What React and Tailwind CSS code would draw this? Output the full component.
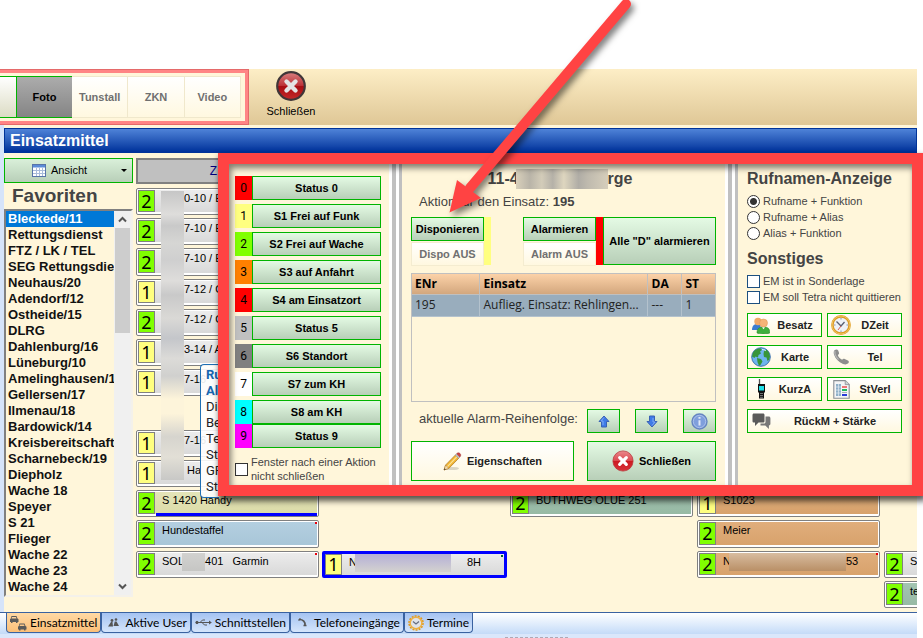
import React from 'react';
import clsx from 'clsx';

const FAVORITES = [
  'Bleckede/11', 'Rettungsdienst', 'FTZ / LK / TEL', 'SEG Rettungsdie', 'Neuhaus/20', 'Adendorf/12',
  'Ostheide/15', 'DLRG', 'Dahlenburg/16', 'Lüneburg/10', 'Amelinghausen/1', 'Gellersen/17',
  'Ilmenau/18', 'Bardowick/14', 'Kreisbereitschaft', 'Scharnebeck/19', 'Diepholz', 'Wache 18',
  'Speyer', 'S 21', 'Flieger', 'Wache 22', 'Wache 23', 'Wache 24',
];

const STATUSES = [
  { digit: '0', label: 'Status 0', color: 'bg-[#ff0000]' },
  { digit: '1', label: 'S1 Frei auf Funk', color: 'bg-[#ffff80]' },
  { digit: '2', label: 'S2 Frei auf Wache', color: 'bg-[#80ff00]' },
  { digit: '3', label: 'S3 auf Anfahrt', color: 'bg-[#ff8000]' },
  { digit: '4', label: 'S4 am Einsatzort', color: 'bg-[#ff0000]' },
  { digit: '5', label: 'Status 5', color: 'bg-[#c0c0c0]' },
  { digit: '6', label: 'S6 Standort', color: 'bg-[#808080]' },
  { digit: '7', label: 'S7 zum KH', color: 'bg-white' },
  { digit: '8', label: 'S8 am KH', color: 'bg-[#00ffff]' },
];

const GRAY = 'from-[#ececec] to-[#d9d9d9]';
const GREEN = 'from-[#a3c4b0] to-[#97baa5]';
const ORANGE = 'from-[#e0ae7c] to-[#d8a26c]';

const UNITS = [
  { pos: 'col-start-1 row-start-1', status: 2, text: '0-10 / E', masked: true },
  { pos: 'col-start-1 row-start-2', status: 2, text: '7-10 / E', masked: true },
  { pos: 'col-start-1 row-start-3', status: 2, text: '7-10 / E', masked: true },
  { pos: 'col-start-1 row-start-4', status: 1, text: '7-12 / G', masked: true },
  { pos: 'col-start-1 row-start-5', status: 2, text: '7-12 / G', masked: true },
  { pos: 'col-start-1 row-start-6', status: 1, text: '3-14 / A', masked: true },
  { pos: 'col-start-1 row-start-7', status: 1, text: '7-16', masked: true },
  { pos: 'col-start-1 row-start-9', status: 1, text: '7-16', masked: true },
  { pos: 'col-start-1 row-start-10', status: 1, text: ' Ha', masked: true },
  { pos: 'col-start-1 row-start-11', status: 2, text: 'S 1420 Handy', fill: 'from-[#e4e4b8] to-[#dcdca8]', underline: true },
  { pos: 'col-start-1 row-start-12', status: 2, text: 'Hundestaffel', fill: 'from-[#b4cfe0] to-[#a8c6d8]', mark: 'bg-red-600' },
  { pos: 'col-start-1 row-start-13', status: 2, text: 'SOL', blur: 'w-[23px] from-[#d2d2d0] to-[#c6c6c4]', after: '401   Garmin', mark: 'bg-red-600' },
  { pos: 'col-start-2 row-start-13', status: 1, text: 'N', blur: 'w-24 from-[#b4afd6] to-[#d4d2cf]', after: '8H', wideGap: true, selected: true, mark: 'bg-green-800' },
  { pos: 'col-start-3 row-start-11', status: 2, text: 'BUTHWEG OLUE 251', fill: GREEN },
  { pos: 'col-start-4 row-start-11', status: 1, text: 'S1023', fill: ORANGE },
  { pos: 'col-start-4 row-start-12', status: 2, text: 'Meier', fill: ORANGE },
  { pos: 'col-start-4 row-start-13', status: 2, text: 'N', fill: ORANGE, blur: 'w-[117px] from-[#d8bda0] to-[#b98f66]', after: '53', mark: 'bg-red-600' },
  { pos: 'col-start-5 row-start-13', status: 2, text: 'S' },
  { pos: 'col-start-5 row-start-14', status: 2, text: 'te', fill: GREEN },
];

const TableIcon = () => (
  <svg width="14" height="13" viewBox="0 0 14 13">
    <rect x=".5" y=".5" width="13" height="12" fill="#fff" stroke="#5874a8" />
    <rect x="1" y="1" width="12" height="2.5" fill="#5b8bd8" />
    <path d="M1 6.5h12M1 9.5h12M4.5 4v8M7.5 4v8M10.5 4v8" stroke="#a9bcdb" />
  </svg>
);

const CloseIcon = ({ size, dark }) => (
  <svg width={size} height={size} viewBox="0 0 30 30">
    <defs>
      <linearGradient id={dark ? 'closeDark' : 'closeRed'} x1="0" y1="0" x2="0" y2="1">
        <stop offset="0" stopColor={dark ? '#d98080' : '#ea8a8e'} />
        <stop offset=".48" stopColor={dark ? '#bd3338' : '#dc4a50'} />
        <stop offset=".52" stopColor={dark ? '#a80d12' : '#cc1a22'} />
        <stop offset="1" stopColor={dark ? '#c42a2a' : '#d8333a'} />
      </linearGradient>
    </defs>
    <circle cx="15" cy="15" r="13.8" fill={dark ? 'url(#closeDark)' : 'url(#closeRed)'} stroke={dark ? '#403638' : '#b8343a'} strokeWidth={dark ? 2.2 : 1} />
    <path d="M10.5 10.5l9 9M19.5 10.5l-9 9" stroke={dark ? '#e4e4e4' : '#fff'} strokeWidth="4.4" strokeLinecap="round" />
  </svg>
);

const PencilIcon = () => (
  <svg width="19" height="19" viewBox="0 0 19 19">
    <ellipse cx="9" cy="16.5" rx="7" ry="1.6" fill="#c9c4b4" opacity=".7" />
    <path d="M1 18l1.6-5L12.4 3l3.4 3.2L5.8 16.4z" fill="#f2b632" stroke="#a8762a" strokeWidth=".7" />
    <path d="M4.2 14.8L14 4.6" stroke="#fbe39a" strokeWidth="1.2" />
    <path d="M12.4 3l1-1 3.4 3.2-1 1z" fill="#c9ccd2" stroke="#85888e" strokeWidth=".5" />
    <path d="M13.6 1.8c1-1.2 2.4-1.2 3.4-.3s1 2.3-.1 3.5z" fill="#d04040" stroke="#943030" strokeWidth=".5" />
    <path d="M1 18l1.6-5 3.2 3.4z" fill="#f3dcae" stroke="#a8762a" strokeWidth=".5" />
    <path d="M1 18l.6-1.8 1.2 1.2z" fill="#333" />
  </svg>
);

const ArrowIcon = ({ down }) => (
  <svg width="12" height="13" viewBox="0 0 12 13" className={down ? 'rotate-180' : ''}>
    <path d="M6 1l5 5.5H8.5V12h-5V6.5H1z" fill="#3f7be8" stroke="#3a62b4" strokeLinejoin="round" />
    <path d="M6 2.5L3 6h2v4" fill="none" stroke="#7fabf5" />
  </svg>
);

const InfoIcon = () => (
  <svg width="17" height="17" viewBox="0 0 17 17">
    <circle cx="8.5" cy="8.5" r="7.5" fill="#7f9fdc" stroke="#6585c0" strokeWidth="1.4" />
    <circle cx="8.5" cy="8.5" r="6.2" fill="none" stroke="#b4c8ee" strokeWidth=".8" />
    <path d="M8.5 4v1.8M8.5 7.2v5.3" stroke="#dfe8f8" strokeWidth="2" />
  </svg>
);

const PeopleIcon = () => (
  <svg width="18" height="17" viewBox="0 0 18 17">
    <path d="M0 13c0-4 2-6 5-6s4 2 4 6z" fill="#3a7bd0" />
    <circle cx="6" cy="4.5" r="3.7" fill="#f0a868" />
    <path d="M5 16c0-4.5 2-6 6.5-6s6.3 1.5 6.3 6c-3 1.2-10 1.2-12.8 0z" fill="#3fae3c" stroke="#2e8a2e" strokeWidth=".6" />
    <circle cx="11.5" cy="6" r="4" fill="#f5b478" stroke="#dd9350" strokeWidth=".5" />
    <path d="M10 10.3l1.5 2 1.5-2z" fill="#fff" />
  </svg>
);

const ClockIcon = () => (
  <svg width="20" height="20" viewBox="0 0 20 20">
    <circle cx="10" cy="10" r="8.6" fill="#eef1f7" stroke="#dc9a28" strokeWidth="2.6" />
    <circle cx="10" cy="10" r="9" fill="none" stroke="#f8d070" strokeWidth=".8" />
    <path d="M10 3v1.5M10 15.5V17M3 10h1.5M15.5 10H17" stroke="#8a93a8" />
    <path d="M5.5 6.5L10 11l3.5-4" fill="none" stroke="#5a5f72" strokeWidth="1.3" />
    <path d="M10 11l-3 4" stroke="#d23a2a" strokeWidth=".8" />
  </svg>
);

const GlobeIcon = () => (
  <svg width="20" height="20" viewBox="0 0 20 20">
    <circle cx="10" cy="10" r="9.3" fill="#6db4ee" stroke="#2f66a8" strokeWidth=".9" />
    <path d="M2 5.5C4 2.5 7 1.2 9.5 1.2L11 3 9 4.5l1 2L7.5 8 7 10.5 4.5 9.5 3.5 11 1 9.5z" fill="#37963a" />
    <path d="M6 11l4 1 1.5 2.5L9.5 18 8 18.7 6.5 15z" fill="#37963a" />
    <path d="M13 4l2.5-1.5 2.5 3 1 4-1 3.5-1.5 1-1-3.5-2.5-.5-.5-3z" fill="#37963a" />
    <path d="M11 2.5c2 0 3 .5 4 1.5" stroke="#d9eefc" fill="none" />
  </svg>
);

const PhoneIcon = () => (
  <svg width="17" height="16" viewBox="0 0 17 16">
    <path d="M1.5 1.2C3 0 4.7.3 5.2 1.5l.8 2.2c.3 1-.2 1.6-1.2 2.2.6 2 2 3.7 4.3 4.8.9-1 1.7-1.2 2.6-.7l3.2 1.5c1.2.6 1.3 2.1.1 3.1-1.4 1-3.2 1-5 .3C5.5 13 2.3 9.5 1 5.5.5 3.6.6 2.1 1.5 1.2z" fill="#8d8d8d" />
    <path d="M2 2c-.6 2.5 1 6 3.5 8.5" stroke="#b9b9b9" strokeWidth="1.2" fill="none" />
  </svg>
);

const RadioIcon = () => (
  <svg width="9" height="20" viewBox="0 0 9 20">
    <path d="M2.5 0v6" stroke="#555" strokeWidth="1.3" />
    <path d="M1 5h7v8l-1 1v5.5H2V14l-1-1z" fill="#111" />
    <rect x="2" y="7" width="5" height="4.5" fill="#1fe0e8" />
    <path d="M3 14.5h3M3 16.5h3M3 18.3h3" stroke="#999" strokeWidth=".7" />
  </svg>
);

const ReportIcon = () => (
  <svg width="17" height="19" viewBox="0 0 17 19">
    <path d="M.8.6h11.4l4 4v13.6H.8z" fill="#f4f5f6" stroke="#8a8f94" strokeWidth="1.1" />
    <path d="M12.2.6v4h4" fill="#cfd3d6" stroke="#8a8f94" strokeWidth=".8" />
    <rect x="3" y="4" width="5" height="12" fill="#8fb0c8" />
    <path d="M3 7h5M3 10h5M3 13h5M5.5 4v12" stroke="#e4edf3" strokeWidth=".7" />
    <path d="M9 7h5" stroke="#e84040" strokeWidth="1.4" />
    <path d="M9 10h5" stroke="#1fb860" strokeWidth="2" />
    <path d="M9 15h5" stroke="#2a3bd8" strokeWidth="2" />
    <path d="M9 12.5h5" stroke="#a8b0b6" />
  </svg>
);

const ChatIcon = () => (
  <svg width="19" height="17" viewBox="0 0 19 17">
    <path d="M13.5 3.5h3.2c1 0 1.7.7 1.7 1.7v5.5c0 1-.7 1.7-1.5 1.7V16l-3.6-3.6H8.5v-1.9h3.7c.8 0 1.3-.6 1.3-1.5z" fill="#777" />
    <path d="M2 .5h9c1 0 1.5.6 1.5 1.5v6c0 1-.5 1.5-1.5 1.5H6.5L3 13V9.5H2C1 9.5.5 9 .5 8V2C.5 1.1 1 .5 2 .5z" fill="#5a5a5a" />
  </svg>
);

const CarsIcon = () => (
  <svg width="17" height="16" viewBox="0 0 17 16" fill="#5a5a5a">
    <path d="M1.5 1h5l1 2.5 1 .7V7h-1v1H6V7H2.5v1H1V7H0V4.2l.8-.7zM2 2l-.5 1.5h5L6 2z" fillRule="evenodd" />
    <path d="M9.5 8.5h5l1 2.5 1 .7v2.800h-1v1H14v-1h-3.500v1H9v-1H8v-2.800l.8-.7zm.5 1L9.500 11h5L14 9.500z" fillRule="evenodd" />
  </svg>
);

const UsersIcon = () => (
  <svg width="11" height="9" viewBox="0 0 11 9" fill="#555">
    <circle cx="4" cy="2.5" r="1.4" />
    <circle cx="8" cy="1.5" r="1.3" />
    <path d="M0 8.5L3 4h1.5L5 8.5zM5.5 8l1.3-4.500h1.700L11 8z" />
  </svg>
);

const UsbIcon = () => (
  <svg width="17" height="9" viewBox="0 0 17 9" fill="none" stroke="#555">
    <circle cx="2" cy="4.5" r="1.2" fill="#555" />
    <path d="M3 4.5h11M5 4.5L7.5 2H10M7 4.5L9.5 7H12" />
    <path d="M14 2.5L16.8 4.5 14 6.5z" fill="#555" stroke="none" />
  </svg>
);

const HandsetIcon = () => (
  <svg width="9" height="9" viewBox="0 0 9 9" fill="none">
    <path d="M1.5 1.5c3.5 0 6 2.5 5.5 6" stroke="#555" strokeWidth="1.7" />
    <path d="M.5 2.5l2-2M5.5 7.5h3" stroke="#555" strokeWidth="1.5" />
  </svg>
);

const GearClockIcon = () => (
  <svg width="16" height="16" viewBox="0 0 16 16">
    <circle cx="8" cy="8" r="7" fill="none" stroke="#e09a20" strokeWidth="1.6" strokeDasharray="2 1.14" />
    <circle cx="8" cy="8" r="5.8" fill="#dfe3ea" stroke="#eeb040" strokeWidth="1.4" />
    <path d="M5 6.5L8 9l3-2.5" fill="none" stroke="#666e80" strokeWidth="1.2" />
  </svg>
);

const GreenButton = ({ className, children, ...props }) => (
  <button
    type="button"
    className={clsx('flex items-center justify-center border border-[#00b400] bg-linear-to-b from-[#e4fae4] to-[#b8cfb8] text-[11px] font-bold whitespace-nowrap text-black', className)}
    {...props}
  >
    {children}
  </button>
);

const LightButton = ({ className, icon, children }) => (
  <button
    type="button"
    className={clsx('flex h-6 items-center border border-[#00b400] bg-linear-to-b from-white to-[#fff8e0] text-[11px] font-bold whitespace-nowrap text-[#222]', className)}
  >
    <span className="flex w-[26px] shrink-0 items-center justify-center">{icon}</span>
    <span className="flex-1 pr-[5px] text-center">{children}</span>
  </button>
);

const OffButton = ({ children }) => (
  <button type="button" disabled className="h-6 w-full border border-[#f4ecd0] bg-linear-to-b from-white to-[#fff8e0] text-[11px] font-bold whitespace-nowrap text-[#707070]">
    {children}
  </button>
);

const Unit = ({ unit }) => (
  <div
    className={clsx(
      'relative flex min-w-0 overflow-hidden rounded-xs bg-white',
      unit.selected ? '-mx-px border-3 border-[#0000ff]' : 'border border-[#808080] p-px pb-[2px]',
      unit.pos
    )}
  >
    <span
      className={clsx(
        'flex w-[17px] shrink-0 items-center justify-center border border-[#808080] font-["Noto_Sans",sans-serif] text-lg leading-none text-black',
        unit.status === 1 ? 'bg-[#ffff80]' : 'bg-[#80ff00]'
      )}
    >
      {unit.status}
    </span>
    <span
      className={clsx(
        'flex min-w-0 flex-1 overflow-hidden bg-linear-to-b text-[11px] leading-4 whitespace-pre text-black',
        unit.masked ? 'pl-[29px]' : 'pl-[7px]',
        unit.fill || GRAY
      )}
    >
      {unit.text}
      {unit.blur && <span className={clsx('-ml-[2px] h-[18px] shrink-0 bg-linear-to-b', unit.blur)} />}
      {unit.after && <span className={unit.wideGap ? 'pl-4' : ''}>{unit.after}</span>}
    </span>
    {unit.mark && <span className={clsx('absolute top-px right-px size-[2px]', unit.mark)} />}
    {unit.underline && <span className="absolute right-px bottom-0 left-[19px] h-[3px] bg-[#0000ff]" />}
  </div>
);

const Toolbar = () => (
  <header className="flex h-14 bg-linear-to-b from-[#fdeec6] to-[#dfc796]">
    <div className="-ml-1 flex w-[253px] border-4 border-[#ff8585] bg-[#fff6da] py-[3px] pr-1 outline -outline-offset-1 outline-[#e56a6a]">
      <button type="button" aria-label="Allgemein" className="w-[17px] border-y border-r border-[#00b400] bg-linear-to-b from-white to-[#dcdcc4]" />
      <button type="button" className="w-[55px] border-y border-[#00b400] bg-linear-to-b from-[#acacac] to-[#858585] text-[11px] font-bold">Foto</button>
      {['Tunstall', 'ZKN', 'Video'].map((label) => (
        <button key={label} type="button" className="flex-1 border-y border-r border-[#f0e8cc] bg-linear-to-b from-white to-[#fff8e0] text-[11px] font-bold text-[#707070]">
          {label}
        </button>
      ))}
    </div>
    <button type="button" className="flex w-[84px] flex-col items-center pt-[2px] text-[11px] leading-4">
      <CloseIcon size={30} dark />
      <span className="pt-[2px]">Schließen</span>
    </button>
  </header>
);

const Sidebar = () => (
  <aside className="flex w-[129px] shrink-0 flex-col">
    <button type="button" className="flex h-[25px] items-center justify-between border border-[#00b400] bg-linear-to-b from-[#daf0da] to-[#b8cfb8] pr-[5px] pl-[27px] text-[11px]">
      <TableIcon />
      <span className="flex-1 pl-[5px] text-left">Ansicht</span>
      <span className="border-x-3 border-t-3 border-x-transparent border-t-black" />
    </button>
    <h2 className="pt-px pb-px pl-2 text-[19px] leading-6 font-bold text-[#444]">Favoriten</h2>
    <div className="flex border-2 border-t-[#808080] border-r-[#f4f1ea] border-b-[#f4f1ea] border-l-[#808080] bg-[#fff6da]">
      <ul className="min-w-0 flex-1 overflow-hidden text-[13px] leading-4 font-bold whitespace-nowrap text-[#111]">
        {FAVORITES.map((name, i) => (
          <li key={name} className={clsx('pl-[2px]', i === 0 && 'bg-[#0078d7] text-white')}>{name}</li>
        ))}
      </ul>
      <div className="flex w-[17px] flex-col items-center justify-between bg-[#f0f0f0]">
        <svg width="17" height="17" viewBox="0 0 17 17" fill="none" stroke="#555" strokeWidth="2"><path d="M5 10.5L8.5 7l3.5 3.5" /></svg>
        <span className="mb-auto h-[105px] w-[15px] bg-[#cdcdcd]" />
        <svg width="17" height="17" viewBox="0 0 17 17" fill="none" stroke="#555" strokeWidth="2"><path d="M5 6.5L8.5 10 12 6.5" /></svg>
      </div>
    </div>
  </aside>
);

const Board = () => (
  <section className="relative flex min-w-0 flex-1 flex-col overflow-hidden pb-1">
    <button type="button" className="mb-1 h-[26px] w-[183px] border-2 border-[#808080] bg-[#c0c0c0] pr-7 text-xs text-[#000080]">Z</button>
    <div className="grid flex-1 grid-cols-[repeat(5,183px)] grid-rows-[repeat(14,minmax(0,1fr))] gap-x-1 gap-y-[3px]">
      {UNITS.map((unit) => (
        <Unit key={unit.pos} unit={unit} />
      ))}
    </div>
    <div className="absolute top-[33px] left-[25px] h-[289px] w-[23px] bg-[linear-gradient(#c6c6c6,#dedddb_8%,#c9c9c9_12%,#d6d6d4_18%,#cfcfcf_24%,#dedddb_31%,#c9c9c9_36%,#dad9d6_44%,#c4c6ca_51%,#dcdbd8_58%,#d0d0ce_64%,#fdf4da_72%,#fdf4da_77%,#d6d4ce_85%,#e2dfd6_92%,#c8c8c6)]" />
    <div className="absolute top-[206px] left-16 h-[134px] w-[19px] rounded-l-sm border border-r-0 border-[#1f6fb4] bg-white/90 pt-[2px] pl-[5px] font-[Roboto,sans-serif] text-[13px] leading-4 whitespace-nowrap text-[#222]">
      <p className="font-bold text-[#1666b0]">Ru</p>
      <p className="font-bold text-[#1666b0]">Al</p>
      <p>Die</p>
      <p>Be</p>
      <p>Te</p>
      <p>Sta</p>
      <p>GF</p>
      <p>Sta</p>
    </div>
  </section>
);

const Tab = ({ icon, active, children }) => (
  <button
    type="button"
    className={clsx(
      'flex h-5 items-center gap-[3px] rounded-b-sm border border-t-0 border-[#3a62a0] px-[3px] whitespace-nowrap',
      active ? 'bg-linear-to-b from-[#ffd9a4] to-[#fbbf78]' : 'bg-linear-to-b from-[#a5c3f2] to-[#d5e5fb]'
    )}
  >
    {icon}
    {children}
  </button>
);

const TabBar = () => (
  <footer className="flex flex-col items-center bg-[#dae7fb]">
    <nav className="flex h-[22px] items-start self-stretch border-t border-[#3a62a0] bg-linear-to-b from-white to-[#c4dbf8] pl-[6px] font-[Lato,sans-serif] text-xs text-black">
      <Tab icon={<CarsIcon />} active>Einsatzmittel</Tab>
      <Tab icon={<span className="px-[3px]"><UsersIcon /></span>}>Aktive User</Tab>
      <Tab icon={<UsbIcon />}>Schnittstellen</Tab>
      <Tab icon={<span className="px-1"><HandsetIcon /></span>}>Telefoneingänge</Tab>
      <Tab icon={<GearClockIcon />}>Termine</Tab>
    </nav>
    <span className="mt-[3px] ml-[156px] w-[63px] border-t border-dashed border-[#b0a8b4]" />
  </footer>
);

const Splitter = () => (
  <div className="flex w-[13px] shrink-0 bg-white pl-[3px]">
    <span className="w-1 bg-[#c0c0c0]" />
    <span className="ml-[3px] w-[3px] bg-[#c0c0c0]" />
  </div>
);

const StatusRow = ({ digit, label, color }) => (
  <div className="flex h-6">
    <span className={clsx('flex w-[17px] items-center justify-center font-[Roboto,sans-serif] text-xs', color)}>{digit}</span>
    <GreenButton className="flex-1">{label}</GreenButton>
  </div>
);

const StatusPanel = () => (
  <section className="w-40 shrink-0 pt-3 pr-2 pl-[6px]">
    <div className="flex flex-col gap-1">
      {STATUSES.map((status) => (
        <StatusRow key={status.digit} {...status} />
      ))}
    </div>
    <StatusRow digit="9" label="Status 9" color="bg-[#ff00ff]" />
    <label className="flex items-center gap-[3px] pt-[7px] text-[11px] leading-[14px] whitespace-nowrap text-[#444]">
      <input type="checkbox" className="size-[13px] shrink-0 appearance-none border border-[#333] bg-white" />
      <span>Fenster nach einer Aktion<br />nicht schließen</span>
    </label>
  </section>
);

const ActionPanel = () => (
  <section className="flex min-w-0 flex-1 flex-col pt-[5px] pr-[9px] pb-1 pl-[9px] text-[#444]">
    <h2 className="flex items-center justify-center pr-[7px] text-base leading-5 font-bold">
      11-4
      <span className="-ml-[3px] h-5 w-[92px] bg-[linear-gradient(90deg,#d9d0bb,#b9b4a8_15%,#d3ccb9_28%,#b5b1a8_40%,#ded6bf_52%,#b0ada6_68%,#bfbaae_78%,#d6cebb)]" />
      rge
    </h2>
    <p className="pt-[5px] pl-2 text-[13px] leading-4">Aktion für den Einsatz: <b>195</b></p>
    <div className="mt-[7px] flex h-12">
      <div className="w-[73px]">
        <GreenButton className="h-6 w-full">Disponieren</GreenButton>
        <OffButton>Dispo AUS</OffButton>
      </div>
      <span className="w-[7px] bg-[#ffff80]" />
      <div className="ml-auto w-[73px]">
        <GreenButton className="h-6 w-full">Alarmieren</GreenButton>
        <OffButton>Alarm AUS</OffButton>
      </div>
      <span className="w-[7px] bg-[#ff0000]" />
      <GreenButton className="w-[113px]">Alle "D" alarmieren</GreenButton>
    </div>
    <div className="mt-2 h-[129px] border border-[#c0c0c0] font-['Open_Sans','Noto_Sans',sans-serif] text-xs">
      <table className="w-full table-fixed border-collapse text-left leading-[18px] whitespace-nowrap">
        <thead>
          <tr className="h-5 bg-linear-to-b from-[#fcd2a8] to-[#d3a77e] text-black">
            <th className="w-[67px] border-r border-b border-[#c0c0c0] px-[3px]">ENr</th>
            <th className="border-r border-b border-[#c0c0c0] px-1">Einsatz</th>
            <th className="w-[34px] border-r border-b border-[#c0c0c0] px-1">DA</th>
            <th className="w-[34px] border-b border-[#c0c0c0] px-1">ST</th>
          </tr>
        </thead>
        <tbody>
          <tr className="h-[22px] bg-[#99adbd] text-[#222]">
            <td className="border-r border-b border-[#b4c2cd] px-[3px]">195</td>
            <td className="border-r border-b border-[#b4c2cd] px-1">Auflieg. Einsatz: Rehlingen...</td>
            <td className="border-r border-b border-[#b4c2cd] px-1">---</td>
            <td className="border-b border-[#b4c2cd] px-1">1</td>
          </tr>
        </tbody>
      </table>
    </div>
    <div className="flex items-center justify-between pt-[7px]">
      <span className="pb-[5px] pl-2 text-[13px] leading-4 whitespace-nowrap">aktuelle Alarm-Reihenfolge:</span>
      <div className="flex w-[129px] justify-between">
        <GreenButton className="h-6 w-[33px]" aria-label="Nach oben"><ArrowIcon /></GreenButton>
        <GreenButton className="h-6 w-[33px]" aria-label="Nach unten"><ArrowIcon down /></GreenButton>
        <GreenButton className="h-6 w-[33px]" aria-label="Info"><InfoIcon /></GreenButton>
      </div>
    </div>
    <div className="flex justify-between gap-[13px] pt-2">
      <button type="button" className="flex h-10 flex-1 items-center justify-center gap-[5px] border border-[#00b400] bg-linear-to-b from-white to-[#fff8e0] text-[11px] font-bold text-[#222]">
        <PencilIcon />
        Eigenschaften
      </button>
      <GreenButton className="h-10 w-[129px] gap-[5px]">
        <CloseIcon size={22} />
        Schließen
      </GreenButton>
    </div>
  </section>
);

const Radio = ({ children, ...props }) => (
  <label className="flex h-4 items-center gap-[3px]">
    <input
      type="radio"
      name="rufnamen"
      className="size-[13px] shrink-0 appearance-none rounded-full border border-[#333] bg-white checked:bg-[radial-gradient(circle,#333_3px,#fff_4px)]"
      {...props}
    />
    {children}
  </label>
);

const Check = ({ children }) => (
  <label className="flex h-4 items-center gap-[3px]">
    <input type="checkbox" className="size-[13px] shrink-0 appearance-none border border-[#1c4f80] bg-white" />
    {children}
  </label>
);

const OptionsPanel = () => (
  <section className="w-[174px] shrink-0 pt-[3px] pr-[10px] pl-[9px] text-[11px] whitespace-nowrap text-[#444]">
    <h2 className="text-base leading-6 font-bold">Rufnamen-Anzeige</h2>
    <div className="pt-[2px]">
      <Radio defaultChecked>Rufname + Funktion</Radio>
      <Radio>Rufname + Alias</Radio>
      <Radio>Alias + Funktion</Radio>
    </div>
    <h2 className="pt-[6px] text-base leading-6 font-bold">Sonstiges</h2>
    <div className="pt-[2px]">
      <Check>EM ist in Sonderlage</Check>
      <Check>EM soll Tetra nicht quittieren</Check>
    </div>
    <div className="grid grid-cols-2 gap-x-[5px] gap-y-2 pt-2">
      <LightButton icon={<PeopleIcon />}>Besatz</LightButton>
      <LightButton icon={<ClockIcon />}>DZeit</LightButton>
      <LightButton icon={<GlobeIcon />}>Karte</LightButton>
      <LightButton icon={<PhoneIcon />}>Tel</LightButton>
      <LightButton icon={<RadioIcon />}>KurzA</LightButton>
      <LightButton icon={<ReportIcon />}>StVerl</LightButton>
      <LightButton className="col-span-2" icon={<ChatIcon />}>RückM + Stärke</LightButton>
    </div>
  </section>
);

const StatusDialog = () => (
  <div className="absolute top-[153px] right-0 left-[218px] border-11 border-[#ff4343] shadow-[2px_4px_6px_1px_rgba(0,0,0,0.65)]">
    <div className="relative flex bg-[#fff6da]">
      <StatusPanel />
      <Splitter />
      <ActionPanel />
      <Splitter />
      <OptionsPanel />
      <div className="pointer-events-none absolute inset-0 shadow-[inset_2px_4px_6px_rgba(0,0,0,0.5)]" />
    </div>
  </div>
);

const PointerArrow = () => (
  <svg className="pointer-events-none absolute top-0 left-[430px] overflow-visible drop-shadow-[3px_4px_3px_rgba(0,0,0,0.5)]" width="210" height="220" viewBox="430 0 210 220" fill="#ff4343">
    <path d="M626 4L470 188" stroke="#ff4343" strokeWidth="10" strokeLinecap="round" />
    <path d="M449.5 212.5L457 180l24 18z" />
  </svg>
);

export default function App() {
  return (
    <div className="relative flex min-h-screen flex-col overflow-hidden bg-white pt-[69px] font-['Liberation_Sans',Arial,sans-serif] text-black">
      <div className="mr-[6px] flex flex-1 flex-col bg-[#fff6da]">
        <Toolbar />
        <main className="flex flex-1 flex-col border-l-4 border-[#d6e4fa] pt-[3px]">
          <h1 className="h-[25px] border border-[#003399] bg-linear-to-b from-[#4f83d8] to-[#00309a] pl-[5px] text-base leading-[23px] font-bold text-white">Einsatzmittel</h1>
          <div className="flex flex-1 items-start gap-[3px] pt-[5px] pb-3">
            <Sidebar />
            <div className="-mb-3 flex min-w-0 flex-1 self-stretch">
              <Board />
            </div>
          </div>
        </main>
        <TabBar />
      </div>
      <StatusDialog />
      <PointerArrow />
    </div>
  );
}
